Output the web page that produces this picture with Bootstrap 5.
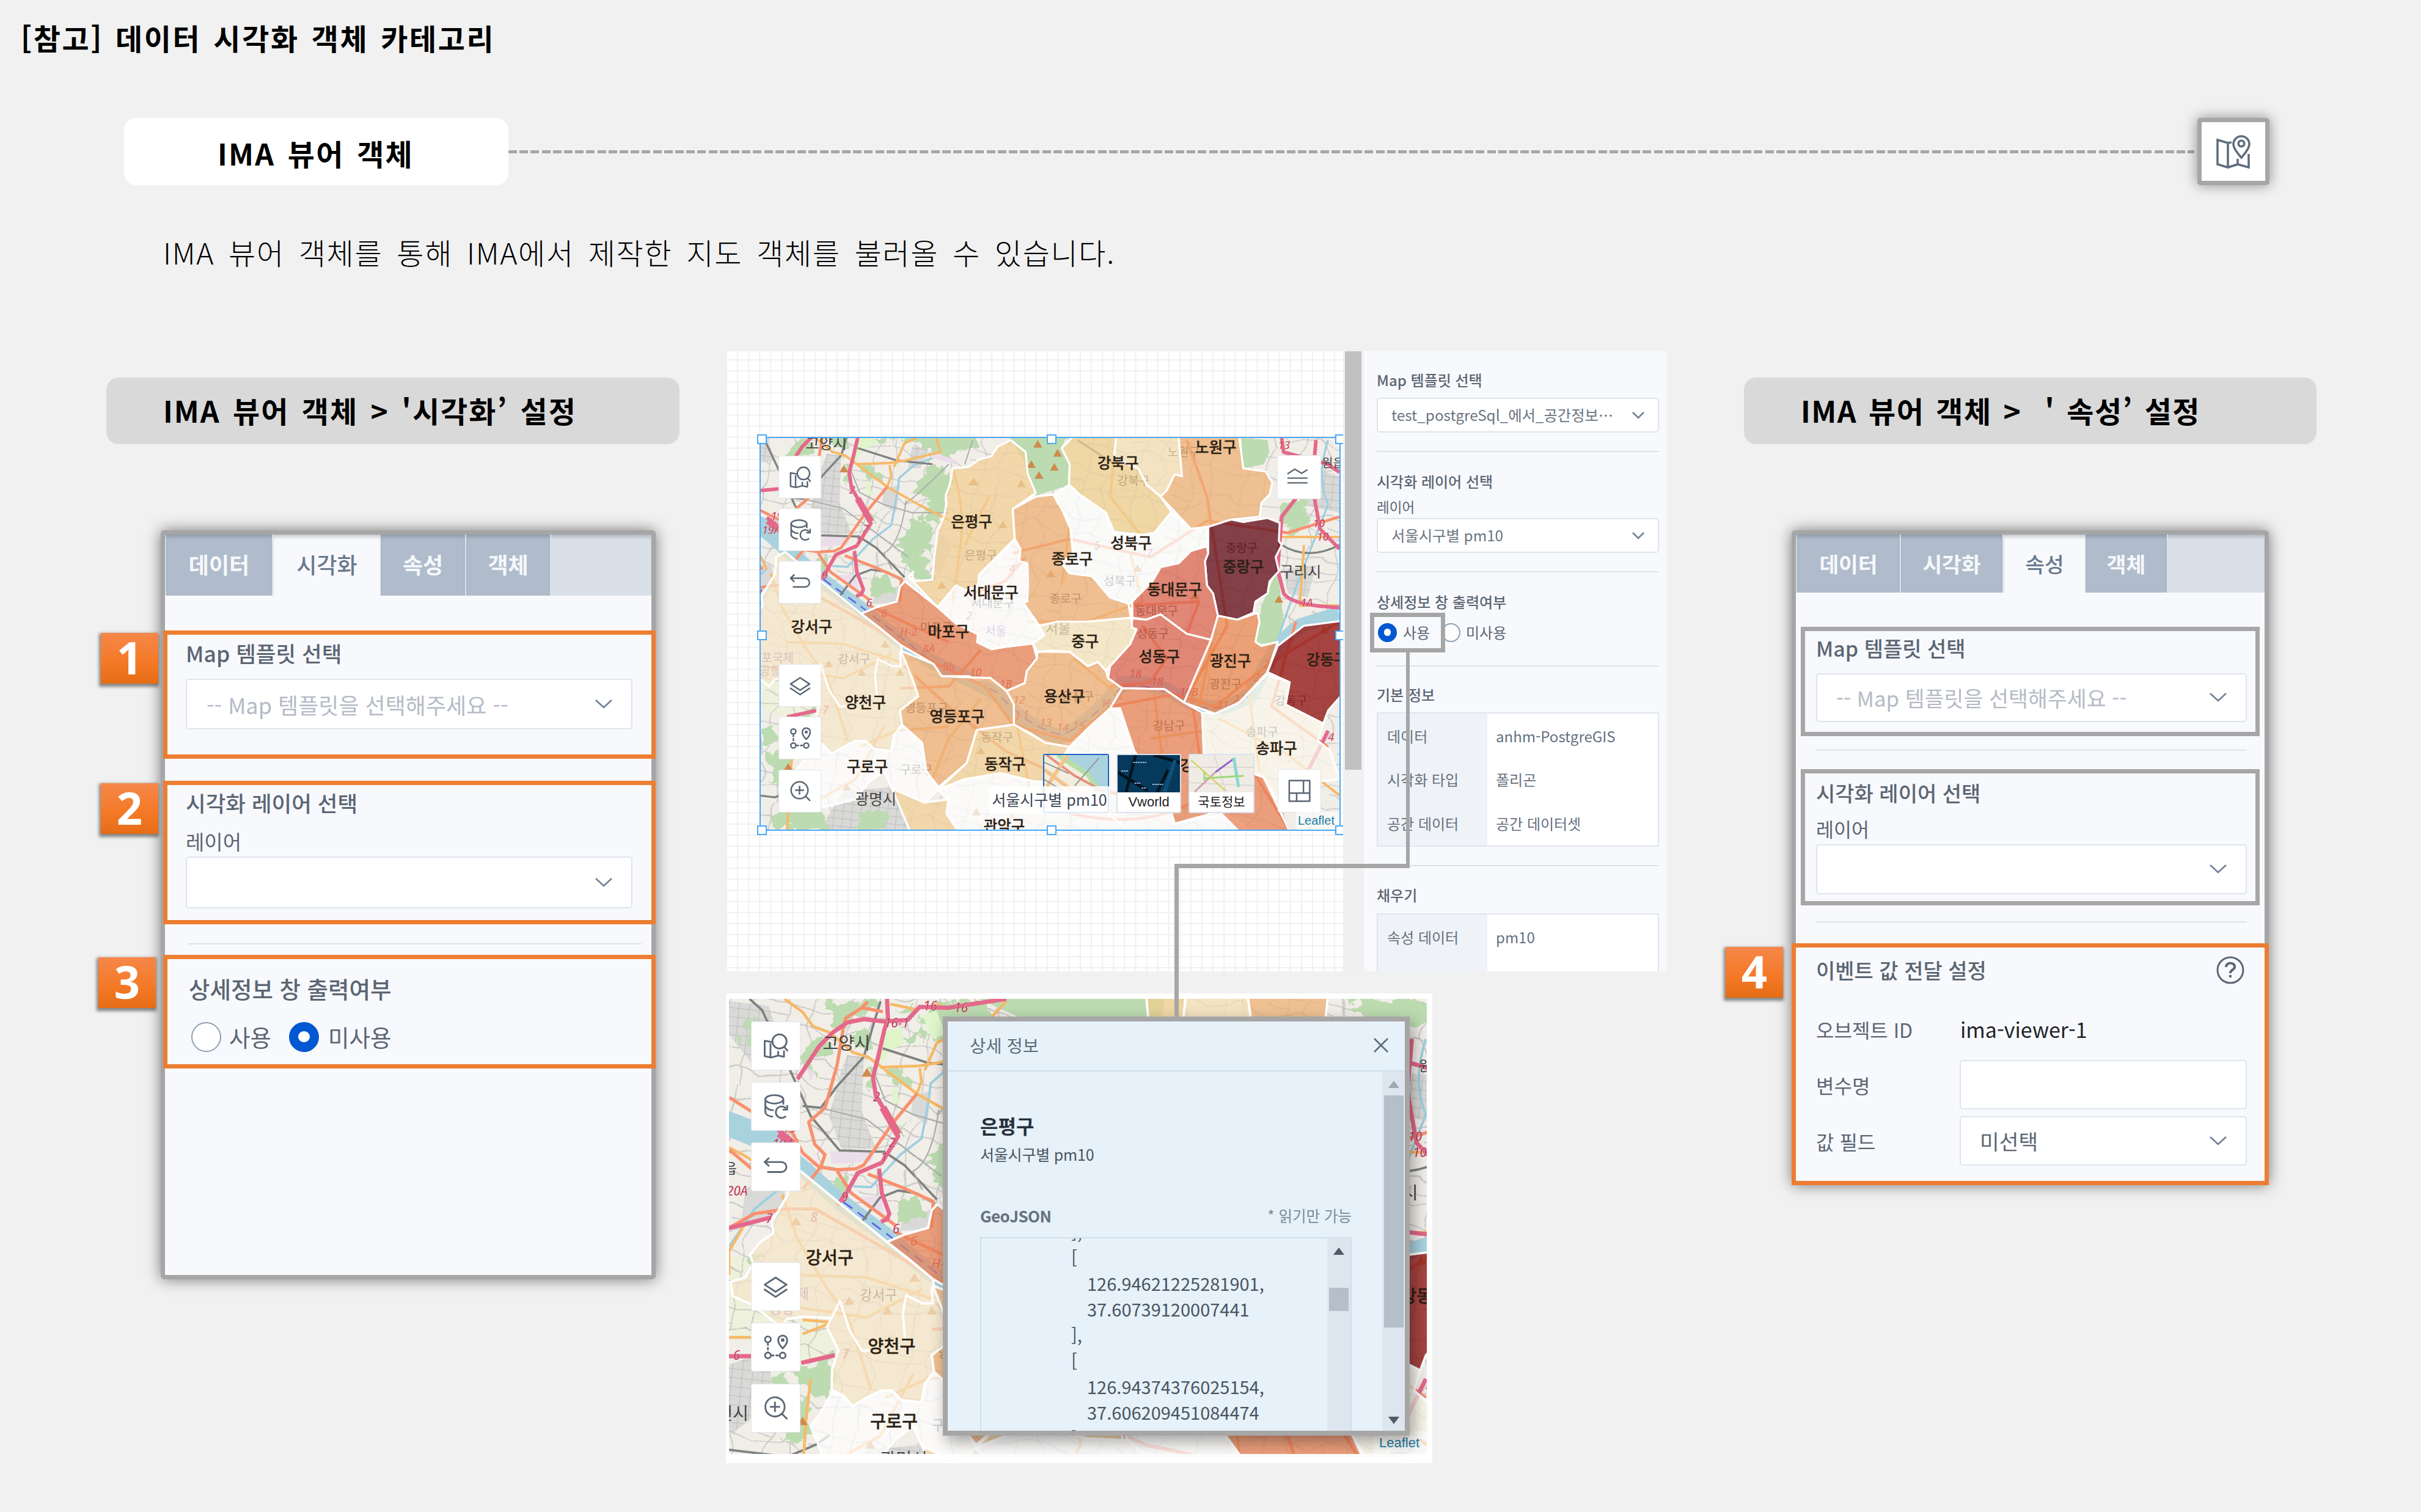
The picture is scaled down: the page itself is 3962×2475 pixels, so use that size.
<!DOCTYPE html>
<html lang="ko">
<head>
<meta charset="utf-8">
<title>데이터 시각화 객체 카테고리</title>
<link href="https://cdn.jsdelivr.net/npm/bootstrap@5.3.0/dist/css/bootstrap.min.css" rel="stylesheet">
<style>
body{width:3962px;height:2475px;overflow:hidden;background:#f1f1f1;font-family:"Noto Sans CJK KR","Noto Sans",sans-serif;color:#5b6673;line-height:1}
.slide-title{padding:31px 0 0 34px;height:193px;font-size:48px;line-height:60px;font-weight:700;color:#000;letter-spacing:2.6px;word-spacing:4px;white-space:nowrap}
.topic-row{height:110px;padding-left:203px;padding-right:248px}
.topic-pill{width:629px;height:110px;border-radius:20px;color:#000;font-size:48px;font-weight:700;letter-spacing:2.2px;word-spacing:5px;padding:4px 2px 0 0;white-space:nowrap}
.dash-line{height:5px;flex:1;background:repeating-linear-gradient(90deg,#a6a6a6 0 14px,transparent 14px 18.2px);margin-right:5px}
.map-btn{width:118px;height:110px;border:7px solid #a6a6a6;border-radius:5px;box-shadow:0 0 22px rgba(0,0,0,.42)}
.intro-text{height:272px;padding:77px 0 0 267px;font-size:48px;line-height:64px;font-weight:300;color:#000;letter-spacing:1.7px;word-spacing:7.8px;white-space:nowrap}
.col-left{width:1188px;padding:43px 0 0 174px}
.col-mid{width:1540px;position:relative}
.col-right{padding:43px 0 0 126px}
.sec-title{height:109px;border-radius:20px;background:#d9d9d9;color:#000;font-size:48px;font-weight:700;letter-spacing:2px;word-spacing:5px;padding:0 0 3px 93px;white-space:pre}
.shot{border:7px solid #a6a6a6;border-radius:6px;background:#f8f9fd;box-shadow:0 0 24px rgba(0,0,0,.5);margin-top:141px}
.shot-l{width:810px;height:1226px;margin-left:89px}
.shot-r{width:781px;height:1072px;margin-left:78px}
.tabbar{background:#dae0e8;box-shadow:inset 0 6px 6px -3px rgba(70,80,90,.35)}
.tabitem{background:#b0bccb;color:#f6f8fb;font-weight:700;border-right:2px solid #dae0e8;box-shadow:inset 0 6px 6px -3px rgba(70,80,90,.35)}
.tabitem.on{background:#f8f9fd;color:#68798d;border:0;font-weight:500}
.callout{position:relative;border:7px solid #ed7d31}
.callout.plain{border-color:#a6a6a6}
.lbl{font-weight:500;white-space:nowrap;display:flex;align-items:center}
.pick{background:#fff;border:2px solid #dfe4ec;border-radius:5px;display:flex;align-items:center;justify-content:space-between;white-space:nowrap}
.ph{color:#b5bac6}
.chev{fill:none;stroke:#6f8095;stroke-width:2.6}
.rule{height:2px;background:#dde2e9}
.radio{border-radius:50%;border:2px solid #8f9fb2;background:#fff;flex:none}
.radio.on{border-color:#0058d0;background:#0058d0;display:flex;align-items:center;justify-content:center}
.radio.on::after{content:"";width:42%;height:42%;border-radius:50%;background:#fff}
.num{position:absolute;width:94px;height:83px;background:linear-gradient(#f5874a,#f57a28 55%,#e66c15);box-shadow:-1px 3px 5px 2px rgba(60,60,60,.6);color:#fff;font:700 74px/80px "Noto Sans","Open Sans",sans-serif;text-align:center}
.board{height:1015px}
.grid-area{width:1010px;padding:140px 0 0 55px;overflow:hidden;background-color:#fff;background-image:linear-gradient(90deg,#f0f0f0 2px,transparent 2px),linear-gradient(#f0f0f0 2px,transparent 2px);background-size:18.1px 18.1px;background-position:0 13px}
.map-w{width:951px;height:645px;position:relative;border:2px solid #4aa8f8}
.map-w>svg.base,.map-2>svg.base{display:block;width:100%;height:100%}
.hd{position:absolute;width:16px;height:16px;border:2px solid #4aa8f8;background:#fff}
.tool{position:absolute;background:#fff;border:1px solid #e0e4ea;border-radius:3px;display:flex;align-items:center;justify-content:center;color:#5b6775}
.tool svg{width:54%;height:54%;fill:none;stroke:currentColor;stroke-width:2.7;stroke-linejoin:round}
.thumb{position:absolute;top:517px;height:97px;background:#fff;border:2px solid #d9e2ee;border-radius:3px;overflow:hidden;font-size:21px;color:#222;text-align:center;white-space:nowrap}
.thumb svg{display:block;width:100%;height:61px}
.layer-tip{position:absolute;left:373px;top:570px;width:199px;height:45px;background:rgba(255,255,255,.85);font-size:25px;color:#3c4654;text-align:center;line-height:42px;white-space:nowrap;border-radius:3px}
.leaf{position:absolute;color:#1f7fa5;font-family:"Liberation Sans",Arial,sans-serif;background:rgba(255,255,255,.6)}
.gutter{width:34px;background:#f0f0f0;padding-left:3px}
.gutter div{width:27px;height:685px;background:#c1c1c1}
.props{width:496px;background:#f8f9fd;padding:25px 13px 0 21px;overflow:hidden;font-size:24px}
.props .lbl.t{height:44px}
.props .pick{height:57px;font-size:24.3px;padding:0 22px;color:#6a7480}
.kv{border:2px solid #dfe5ec;background:#fff;font-size:24px;color:#66717f}
.kv .k{width:179px;background:#eff3f7;padding-left:15px}
.kv .v{padding-left:14px}
.kv>div>div{height:71.5px;padding-top:2px;display:flex;align-items:center;white-space:nowrap}
.hl{position:absolute;left:1054px;top:428px;width:123px;height:65px;border:7px solid #a6a6a6}
.wire{position:absolute;background:#a6a6a6}
.map-2{margin-top:36px;width:1156px;height:769px;background:#fff;padding:9px 9px 15px 5px;position:relative}
.dlg{position:absolute;left:355px;top:38px;width:764px;height:686px;border:8px solid #a6a6a6;background:#e6f1f9;box-shadow:6px 10px 24px rgba(0,0,0,.35);overflow:hidden}
.dlg-h{height:82px;border-bottom:2px solid #cfdeea;padding:0 26px 2px 36px;font-size:28.5px;color:#5f6c7a}
.dlg-m{padding:72px 50px 0 53px}
.dlg-s{width:37px;background:#dde6ee;position:relative}
.geo{border:2px solid #d3dfe9;height:340px;overflow:hidden;font-size:29px;line-height:42.3px;color:#4a545f;white-space:pre}
.arr{fill:#505a64}
</style>
</head>
<body>
<svg width="0" height="0" class="position-absolute">
<defs>
<pattern id="streets" width="130" height="110" patternUnits="userSpaceOnUse" patternTransform="rotate(11)"><path d="M0 20Q60 40 130 20M30 0Q50 50 30 110M0 80L70 62L130 80M95 0L80 62L100 110M0 50L38 54" stroke="#bfbfbf" stroke-width="2" fill="none"/></pattern>
<pattern id="city" width="22" height="19" patternUnits="userSpaceOnUse" patternTransform="rotate(6)"><path d="M0 0H22M0 0V19" stroke="#b3b3b3" stroke-width="2" fill="none"/></pattern>
<filter id="rag" x="-5%" y="-5%" width="110%" height="110%"><feTurbulence type="fractalNoise" baseFrequency=".03" numOctaves="3" seed="4"/><feDisplacementMap in="SourceGraphic" scale="52" xChannelSelector="R" yChannelSelector="G"/></filter>
<filter id="wob" x="-2%" y="-2%" width="104%" height="104%"><feTurbulence type="fractalNoise" baseFrequency=".012" numOctaves="2" seed="9"/><feDisplacementMap in="SourceGraphic" scale="40" xChannelSelector="R" yChannelSelector="G"/></filter>
<symbol id="ic-search" viewBox="0 0 40 40"><path d="M14 14L3 12V36L13 38L24 35L33 37V27M12 16V37M24 28V35"/><circle cx="26" cy="13" r="11"/><path d="M33 21L39 28"/></symbol>
<symbol id="ic-db" viewBox="0 0 40 40"><ellipse cx="18" cy="9" rx="14" ry="6.500"/><path d="M4 9V28C4 33 10 36 16 36M32 9V17M4 19C6 24 11 26 17 26M36 23A9 9 0 1 0 36 35M38 18V25H31"/></symbol>
<symbol id="ic-back" viewBox="0 0 40 40"><path d="M10 6L3 12.500L10 19M3 12.500H29A7.500 7.500 0 0 1 29 28H7"/></symbol>
<symbol id="ic-layer" viewBox="0 0 40 40"><path d="M20 6L37 17L20 28L3 17ZM2 24L20 36L38 24"/></symbol>
<symbol id="ic-route" viewBox="0 0 40 40"><circle cx="8" cy="8" r="4.500"/><circle cx="8" cy="33" r="4.500"/><circle cx="31" cy="33" r="4.500"/><path d="M8 13V28M13 33H26" stroke-dasharray="5 2"/><path d="M31 22C26 17 24 13 24 9A7 7 0 0 1 38 9C38 13 36 17 31 22Z"/><circle cx="31" cy="9" r="1.400"/></symbol>
<symbol id="ic-zoom" viewBox="0 0 40 40"><circle cx="19" cy="18" r="15"/><path d="M30 29L38 37M19 10V26M11 18H27"/></symbol>
<symbol id="seoul" viewBox="5 155 1523 1050">
<path fill="#f1eee8" d="M0 150H1530V1210H0Z"/>
<path fill="#eef2dc" d="M0 700H60L20 760L110 830L220 840L225 900L160 930L0 860Z"/>
<g filter="url(#wob)"><path fill="url(#streets)" d="M-40 110H1570V1250H-40Z"/></g>
<g fill="#d9d9d7"><path d="M259 274L294 278L290 395L320 472L246 472L220 403L246 308ZM5 160L90 170L130 290L60 300L5 230ZM470 255L510 262L490 310L460 310ZM400 360L440 350L430 420L395 400ZM540 470L570 500L540 570L520 560ZM1370 320L1430 300L1528 330V420L1440 400ZM1390 560L1470 550L1450 630L1400 620ZM5 930L90 900L100 1010L5 1080ZM300 1110L420 1100L460 1205H240ZM380 620L440 600L430 645L370 645ZM40 560L120 545L130 600L30 640Z"/></g>
<path fill="url(#city)" d="M259 274L294 278L290 395L320 472L246 472L220 403L246 308ZM5 160L90 170L130 290L60 300L5 230ZM1390 560L1470 550L1450 630L1400 620ZM1370 320L1430 300L1528 330V420L1440 400ZM300 1110L420 1100L460 1205H240ZM5 930L90 900L100 1010L5 1080ZM470 255L510 262L490 310L460 310Z"/>
<g fill="#bcdbb0" filter="url(#rag)"><path d="M210 190L230 165L300 155L320 180L270 200L240 210ZM30 220L60 200L75 240L50 255ZM170 250L220 235L225 265L190 290L180 330L165 300ZM270 225L310 215L305 260L280 262ZM360 170L400 165L420 215L390 240L430 250L420 200L450 160L540 160L640 250L560 280L460 250L440 210ZM300 300L325 310L310 340L298 330ZM345 310L375 300L400 340L360 345ZM500 310L550 300L570 345L540 440L500 430L520 380L480 370L490 350ZM460 440L500 430L515 490L500 520L520 580L475 580L450 540L430 500L450 480ZM370 420L390 410L380 450ZM225 540L255 530L260 560L225 560ZM375 590L410 575L420 615L370 625ZM60 690L80 700L50 720L40 705ZM150 940L230 905L225 985L200 1000L150 970ZM95 950L130 940L130 980L95 990ZM120 1010L180 1000L175 1090L120 1080ZM140 1150L250 1150L270 1205H120ZM340 1165L400 1150L410 1205H330ZM1385 400L1440 390L1460 440L1410 470L1380 450ZM1330 160H1528V200L1420 230Z"/></g>
<g fill="#bcdbb0"><path d="M530 150L940 150L930 235H700L640 200ZM714 235H850L840 260L858 300L856 352L776 378L751 300ZM1285 235L1350 240L1355 270L1340 300L1290 310ZM1335 650L1375 560L1390 690L1375 742L1322 745Z"/></g>
<path fill="#e0f5ca" d="M340 225L375 215L380 250L350 265L325 300L330 250ZM420 190L450 180L470 230L440 240ZM355 350L365 340L370 375L358 380Z"/>
<path fill="#ebdeea" d="M170 300L190 310L180 330ZM222 478L320 478L310 500L225 505ZM520 270L580 290L575 300L520 285ZM285 575L330 572L340 615L300 595Z"/>
<g fill="none" stroke="#a9d2df"><path stroke-width="52" d="M-10 415Q60 440 105 462"/><path stroke-width="36" d="M95 455L170 520L250 590L340 655Q430 735 520 790Q610 830 680 870Q760 960 840 975Q900 950 990 845Q1060 830 1140 880Q1220 930 1310 870Q1370 740 1430 700L1528 670"/></g>
<path fill="none" stroke="#5f5fee" stroke-width="3.500" stroke-dasharray="24 14" d="M250 585L340 650L520 790Q610 830 680 865Q760 955 840 970Q900 950 990 850Q1060 840 1140 885Q1220 930 1310 870"/>
<path fill="none" stroke="#9ccfe0" stroke-width="5" d="M475 302L438 334L429 395L418 451L373 485L333 528L310 554L272 552M475 302L520 285M1500 240Q1470 330 1500 400Q1420 600 1380 720M5 680L60 600L110 560"/>
<g fill="none" stroke="#7f8280" stroke-width="5" stroke-linejoin="round"><path d="M49 155L76 179L141 317L180 403L242 476L338 479L381 507L451 580M290 627L329 576L368 561L408 567L447 589M163 382L202 386L237 340L294 278L330 160M1385 500Q1450 540 1528 500M880 240L970 300M5 1110L130 1125L190 1100L220 1080M335 260L430 290L520 300" /></g>
<g fill="none" stroke="#adadad" stroke-width="3"><path d="M202 386L300 410L380 470L460 530M320 320L340 370L400 400L470 420L560 420M455 390Q440 500 400 520L420 560M560 300Q480 380 450 400M620 240L600 300"/></g>
<g fill="none" stroke="#f7b967" stroke-width="6" stroke-linejoin="round"><path d="M124 155L163 183L185 213L220 226L272 269L303 278L329 297L408 356L490 402L565 440M329 300L412 297L451 291L540 270L530 235L600 160M425 306L451 248L500 225M414 302L418 330L408 356M351 166L403 177L460 166M5 470L40 488L90 520L110 560M5 872H55M163 835L226 840M163 865L220 843M5 740V690L40 630M95 800L300 830L420 770M120 570L150 660L210 760L260 830L290 920L310 985M160 1205L170 1050L180 960M570 310Q600 400 590 500L570 640M660 380L600 500M975 240L960 380L1040 480M1010 520L1040 640L900 690L760 690M860 450L840 600M1385 480L1528 480M1440 500L1430 650L1528 650M870 780L990 880M1225 670L1200 800L1180 900M1300 840L1330 1060M640 880L560 980L520 1080M720 900L760 1100L700 1200M1060 980L1190 960M1230 930L1400 1020L1528 1120M400 950L330 1080L240 1130M1070 870L1100 1120M160 740L300 745L440 790M340 1000L430 960L560 950"/></g>
<g fill="none" stroke="#f9906e" stroke-width="7" stroke-linejoin="round"><path d="M303 161L290 174L255 196L250 218L237 295L211 386L176 416L189 463L211 485L202 511L163 558M290 174L335 182M6 364L54 394L141 438L163 481L198 511L237 517L277 515L294 507L355 420L408 356M237 520L268 567L364 636M303 526L380 556L443 584L440 640M6 475L60 520L100 560M5 640L60 610L130 600L190 600L350 690L520 790L650 850L720 945L860 985L960 900L1120 870L1220 900L1360 790L1528 690M1150 240L1200 380L1250 700L1160 860L1180 1010L1230 1160M720 520L860 485L1060 530L1200 440L1400 470L1528 430M1020 650L1180 640L1150 720M364 650L470 700L560 740M450 800L560 900L700 1010L900 1100L1140 1150M1040 700L1100 780L1060 840L960 850M780 1140Q1000 1220 1160 1140M1420 690L1360 900L1500 1000M620 620L700 590L750 530M1320 1070L1400 1200M440 855L560 850L640 760"/></g>
<g fill="none" stroke="#e5688a" stroke-width="9" stroke-linejoin="round"><path d="M344 155L346 196L338 222L325 278L314 321L320 360L333 381L368 446L346 481L333 502L281 524L259 563L237 593M327 515L333 567L349 610L344 622L331 627M152 325L198 256L228 226L259 205L294 198L338 203L388 200L414 172L475 174L600 155M333 381L368 440M110 432L140 455M95 365L150 360M5 912H55M160 926L232 910M0 642L95 618M1385 235L1390 270L1500 300L1528 320M1470 240L1460 350L1480 460L1528 510M1455 340L1385 430L1375 560L1390 620Q1410 650 1528 655M1500 960L1450 1060"/></g>
<path fill="none" stroke="#e5688a" stroke-width="16" d="M335 385L368 442M112 440L142 462"/>
<g fill="#cf8a4e"><path d="M301 301l11 19h-22ZM781 240l11 19h-22ZM830 262l11 19h-22ZM765 290l11 19h-22ZM822 297l11 19h-22ZM784 317l11 19h-22ZM740 338l11 19h-22ZM622 334l14 18h-28ZM695 440l11 18h-22ZM543 590l11 18h-22ZM1490 700l11 18h-22ZM1378 625l11 18h-22ZM149 617l11 18h-22ZM263 785l11 18h-22ZM345 806l11 18h-22ZM440 806l11 18h-22ZM403 736l11 18h-22ZM640 1000l11 18h-22ZM813 562l11 18h-22ZM1028 548l11 18h-22ZM1170 616l11 18h-22ZM629 1152l11 18h-22ZM308 1090l11 18h-22ZM163 1040l11 18h-22Z"/></g>
<g fill="#b3203f" font-family="Noto Sans,sans-serif" font-style="italic" font-weight="500" font-size="27" stroke="#f7d9de" stroke-width=".6"><text x="314" y="372">2</text><text x="348" y="470">2</text><text x="330" y="500">1</text><text x="246" y="585">9</text><text x="356" y="652">6</text><text x="394" y="678">6</text><text x="98" y="472">19A</text><text x="120" y="438">19</text><text x="0" y="572">20A</text><text x="84" y="630">7</text><text x="1376" y="262">13</text><text x="1462" y="456">10</text><text x="1472" y="490">10</text><text x="1432" y="652">1A</text><text x="1500" y="986">4</text><text x="440" y="726">H-2</text><text x="496" y="766">8A</text><text x="545" y="812">9b</text><text x="612" y="825">10</text><text x="686" y="854">1B</text><text x="720" y="894">12</text><text x="728" y="930">J-1</text><text x="786" y="950">13</text><text x="828" y="962">14</text><text x="868" y="957">15</text><text x="936" y="902">16</text><text x="1008" y="828">18</text><text x="1062" y="848">18</text><text x="1132" y="874">19B</text><text x="1224" y="906">21</text><text x="1266" y="892">22</text><text x="1316" y="838">22</text><text x="1340" y="806">23</text><text x="920" y="510">5</text><text x="1050" y="530">7</text><text x="710" y="568">4</text><text x="604" y="684">2</text><text x="422" y="180">16</text><text x="488" y="184">16</text><text x="338" y="216">16-1</text><text x="180" y="627">8</text><text x="248" y="917">7</text><text x="14" y="920">6</text></g>
<g font-family="Noto Sans CJK KR,sans-serif" font-size="29" fill="#333"><text x="600" y="536">은평구</text><text x="616" y="654">서대문구</text><text x="810" y="644">종로구</text><text x="944" y="599">성북구</text><text x="978" y="352">강북구</text><text x="1102" y="280">노원구</text><text x="1246" y="518">중랑구</text><text x="1022" y="674">동대문구</text><text x="1026" y="730">성동구</text><text x="1206" y="855">광진구</text><text x="1066" y="958">강남구</text><text x="1296" y="974">송파구</text><text x="1368" y="896">강동구</text><text x="490" y="714">마포구</text><text x="286" y="793">강서구</text><text x="452" y="914">영등포구</text><text x="640" y="987">동작구</text><text x="440" y="1068">구로구</text><text x="840" y="886">용산구</text><text x="650" y="724" fill="#8a4fb5">서울</text><text x="800" y="719" font-size="34">서울</text><text x="70" y="790" fill="#7a55b0">김포국제</text><text x="92" y="822" fill="#7a55b0">공항</text></g>
<g stroke="#fff" stroke-width="5" stroke-linejoin="round" fill-opacity=".75">
<path fill="#f6e6c8" d="M131 570L133 530L155 517L344 670L442 748L445 765L470 810L485 875L440 910L445 945L425 970L418 1010L375 1005L355 985L330 985L300 1000L270 1018L250 995L225 983L226 940L240 900L215 850L225 831L163 828L130 833L116 850L90 830L55 803L30 792L13 785L8 755L40 745L57 715L50 698L70 672L100 651L97 627Z"/>
<path fill="none" d="M225 831L243 795L252 822L265 860L290 900H310M383 880L378 820L385 783L420 800L442 800L440 765"/>
<path fill="#fdfdfd" d="M225 990L250 995L270 1018L300 1000L330 985L355 985L375 1005L418 1010L425 970L445 945L495 990L505 1060L535 1105L500 1140L420 1105L400 1060L360 1090L330 1130L250 1150L205 1120L180 1060L200 1035Z"/>
<path fill="#f2cf98" d="M420 1103L500 1138L560 1130L555 1165L585 1210H465Z"/>
<path fill="#fdfdfd" d="M535 1108L600 1080L690 1065L770 1085L860 1090L1010 1210H585L555 1165L560 1130Z"/>
<path fill="#f1cf96" d="M570 310L608 307L638 287L666 280L681 257L714 240L751 270L756 324L776 371L719 411L724 485L683 526L636 573L633 600L603 613L578 600L533 654L462 580L472 566L470 590L520 586L525 526L533 465L548 431L555 398L553 378L563 351Z"/>
<path fill="#e78358" d="M452 590L533 654L578 694L633 721L631 741L666 758L709 751L769 744L779 781L754 812L749 842L704 862L663 829L633 835L611 825L543 825L523 795L442 748L392 707L344 670L382 654L432 640L440 603Z"/>
<path fill="#fdfdfd" d="M533 654L578 600L603 613L633 600L636 573L683 526L724 485L738 510L735 540L755 545L757 590L755 640L745 643L797 724L769 744L709 751L666 758L631 741L633 721L578 694Z"/>
<path fill="#edaf76" d="M719 411L776 380L820 375L830 395L848 420L862 460L868 520L840 545L860 570L915 577L945 612L960 630L1005 645L1012 680L960 686L900 690L830 690L785 700L745 643L755 640L757 590L755 545L735 540L738 510L724 485Z"/>
<path fill="#efcf90" d="M900 150H985L975 235L970 285L1030 310L1050 350L1085 380L1112 418L1070 470L1040 475L970 468L950 420L885 375L858 350L860 300L840 260L865 235L905 200Z"/>
<path fill="#f4dfb4" d="M985 150H1118L1130 235L1140 330L1120 325L1100 375L1085 380L1050 350L1030 310L970 285L975 235Z"/>
<path fill="#edb076" d="M1118 150H1290L1280 235L1290 310L1345 318L1362 345L1355 375L1335 395L1330 430L1260 437L1205 455L1160 460L1085 380L1100 365L1120 325L1138 330L1130 235Z"/>
<path fill="#fcfefd" d="M820 375L858 352L885 375L950 420L955 450L970 468L1040 475L1070 470L1112 418L1160 460L1203 455L1200 503L1160 515L1130 545L1085 560L1065 590L1015 640L1005 645L960 630L945 612L915 577L860 570L840 545L868 520L862 460L840 410Z"/>
<path fill="#6b1a24" fill-opacity=".82" d="M1203 455L1260 437L1290 443L1350 433L1380 445L1378 490L1385 500L1370 530L1378 565L1355 590L1350 620L1320 640L1315 668L1275 685L1227 675L1215 620L1200 600L1195 540L1203 520Z"/>
<path fill="#db6450" d="M1200 503L1203 520L1195 540L1200 600L1215 620L1227 675L1210 735L1150 720L1085 672L1050 685L1015 680L1015 640L1065 590L1085 555L1130 545L1160 515Z"/>
<path fill="#db6450" d="M1015 682L1050 685L1085 672L1150 720L1210 735L1143 890L1095 857L990 855L955 830L960 800L1010 745L1025 708L1013 705Z"/>
<path fill="#f4e4be" d="M785 700L830 690L900 690L1012 680L1015 705L1025 710L1010 745L960 800L950 812L930 790L905 800L860 765L815 762L780 764L769 744L797 724Z"/>
<path fill="#eead74" d="M704 862L749 842L754 812L779 781L780 764L860 765L905 800L930 790L950 812L955 830L990 855L960 905L910 950L860 1000L800 990L760 965L722 945L720 895Z"/>
<path fill="#eead74" d="M442 762L523 795L543 825L611 828L663 829L704 862L722 895L722 945L630 958L605 1040L535 1100L505 1060L495 990L445 945L440 910L485 875L470 830Z"/>
<path fill="#f1cf96" d="M630 958L722 945L800 990L860 1000L840 1030L850 1090L770 1085L690 1065L600 1080L535 1105L605 1040Z"/>
<path fill="#fdfdfe" d="M960 905L985 910L1020 1015L1100 1120L1120 1190L1250 1165L1310 1210H1010L860 1090L840 1030L860 1000L910 950Z"/>
<path fill="#e78358" d="M990 855L1095 857L1143 890L1188 915L1192 1015L1310 1065L1340 1075L1405 1210H1280L1230 1160L1120 1190L1100 1120L1020 1010L985 905L960 905Z"/>
<path fill="#e8854f" d="M1227 675L1275 685L1325 668L1330 690L1320 740L1335 750L1375 740L1355 800L1345 825L1280 890L1220 918L1143 890L1210 735Z"/>
<path fill="#f9f5ea" d="M1188 915L1220 918L1280 890L1345 820L1405 840L1395 895L1488 942L1475 985L1505 1010L1528 1080L1440 1090L1385 1150L1340 1075L1310 1065L1192 1015Z"/>
<path fill="#962320" fill-opacity=".84" d="M1535 688L1440 700L1375 750L1350 815L1405 840L1395 895L1488 942L1500 910L1535 870Z"/>
</g>
<g font-family="Noto Sans CJK KR,sans-serif" font-size="37" fill="#444" text-anchor="middle">
<text x="257" y="262">고양시</text><text x="1432" y="580">구리시</text><text x="380" y="1143">광명시</text><text x="1512" y="308" font-size="30">원읍</text><text x="-4" y="1046">인천시</text><text x="8" y="525" font-size="30">읍</text>
<g font-weight="500" fill="#2a2014" stroke="#2a2014" stroke-width=".5"><text x="617" y="456">은평구</text><text x="980" y="311">강북구</text><text x="1222" y="271">노원구</text><text x="1012" y="509">성북구</text><text x="866" y="549">종로구</text><text x="665" y="631">서대문구</text><text x="1120" y="624">동대문구</text><text x="1290" y="568">중랑구</text><text x="221" y="716">강서구</text><text x="560" y="729">마포구</text><text x="898" y="753">중구</text><text x="1082" y="790">성동구</text><text x="1258" y="801">광진구</text><text x="1497" y="798">강동구</text><text x="354" y="904">양천구</text><text x="847" y="889">용산구</text><text x="581" y="938">영등포구</text><text x="1372" y="1018">송파구</text><text x="359" y="1063">구로구</text><text x="700" y="1057">동작구</text><text x="1150" y="1060">강</text><text x="698" y="1210">관악구</text></g></g>
</symbol>
</defs>
</svg>

<h1 class="slide-title m-0">[참고] 데이터 시각화 객체 카테고리</h1>
<header class="topic-row d-flex align-items-center">
<div class="topic-pill bg-white d-flex align-items-center justify-content-center">IMA 뷰어 객체</div>
<div class="dash-line"></div>
<div class="map-btn bg-white d-flex align-items-center justify-content-center"><svg width="58" height="58" viewBox="0 0 58 58" fill="none" stroke="#5f6d7c" stroke-width="3.600"><path d="M26 14L20 15L3 10V50L20 55L36 50L54 55V33M20 15V55M36 41V50"/><path d="M42 39C33 29 29 23 29 17A13 13 0 0 1 55 17C55 23 51 29 42 39Z"/><circle cx="42" cy="16" r="4.800"/></svg></div>
</header>
<p class="intro-text m-0">IMA 뷰어 객체를 통해 IMA에서 제작한 지도 객체를 불러올 수 있습니다.</p>

<main class="d-flex align-items-start">
<section class="col-left flex-shrink-0">
<div class="sec-title d-flex align-items-center" style="width:938px">IMA 뷰어 객체 &gt; '시각화’ 설정</div>
<div class="shot shot-l">
<div class="tabbar d-flex" style="height:100px;font-size:36px;padding-left:2px"><div class="tabitem d-flex align-items-center justify-content-center pb-1" style="width:175px">데이터</div><div class="tabitem on d-flex align-items-center justify-content-center pb-1" style="width:176px">시각화</div><div class="tabitem d-flex align-items-center justify-content-center pb-1" style="width:140px">속성</div><div class="tabitem d-flex align-items-center justify-content-center pb-1" style="width:139px">객체</div></div>
<div class="callout" style="margin:57px -7px 0 -3px;height:210px;padding:6px 31px 0 30px"><span class="num" style="left:-109px;top:-3px">1</span>
<div class="lbl" style="height:48px;font-size:35.500px">Map 템플릿 선택</div>
<div class="pick ph" style="height:83px;margin-top:18px;font-size:36px;padding:0 31px 0 32px">-- Map 템플릿을 선택해주세요 --<svg width="28" height="18" viewBox="0 0 28 18" class="chev"><path d="M1 2L14 14L27 2"/></svg></div></div>
<div class="callout" style="margin:36px -7px 0 -3px;height:235px;padding:5px 31px 0 30px"><span class="num" style="left:-109px;top:-3px">2</span>
<div class="lbl" style="height:48px;font-size:35.500px">시각화 레이어 선택</div>
<div class="lbl fw-normal" style="height:40px;margin-top:19px;font-size:33px">레이어</div>
<div class="pick" style="height:85px;margin-top:5px;padding:0 31px"><i></i><svg width="28" height="18" viewBox="0 0 28 18" class="chev"><path d="M1 2L14 14L27 2"/></svg></div></div>
<div class="rule" style="margin:31px 16px 0 38px"></div>
<div class="callout" style="margin:17px -7px 0 -3px;height:186px;padding:24px 31px 0 35px"><span class="num" style="left:-113px;top:-3px">3</span>
<div class="lbl" style="height:48px;font-size:37.500px">상세정보 창 출력여부</div>
<div class="d-flex align-items-center" style="height:50px;margin:30px 0 0 4px;font-size:37.500px"><i class="radio" style="width:49px;height:49px;margin-right:13px"></i><span style="width:98px">사용</span><i class="radio on" style="width:49px;height:49px;margin-right:15px"></i><span>미사용</span></div></div>
</div>
</section>

<section class="col-mid flex-shrink-0">
<div class="board d-flex">
<div class="grid-area flex-shrink-0">
<div class="map-w">
<svg class="base" viewBox="95 235 1433 970" preserveAspectRatio="none"><use href="#seoul" x="5" y="155" width="1523" height="1050"/></svg>
<div class="tool" style="left:29px;top:29px;width:70px;height:70px"><svg><use href="#ic-search"/></svg></div>
<div class="tool" style="left:29px;top:115px;width:70px;height:70px"><svg><use href="#ic-db"/></svg></div>
<div class="tool" style="left:29px;top:201px;width:70px;height:70px"><svg><use href="#ic-back"/></svg></div>
<div class="tool" style="left:29px;top:370px;width:70px;height:70px"><svg><use href="#ic-layer"/></svg></div>
<div class="tool" style="left:29px;top:456px;width:70px;height:70px"><svg><use href="#ic-route"/></svg></div>
<div class="tool" style="left:29px;top:543px;width:70px;height:70px"><svg><use href="#ic-zoom"/></svg></div>
<div class="tool" style="left:845px;top:28px;width:72px;height:72px;padding-right:6px"><svg viewBox="0 0 40 40"><path d="M1 14L15 5L28 13L39 6M1 22H39M1 31H39"/></svg></div>
<div class="tool" style="left:846px;top:542px;width:71px;height:71px"><svg viewBox="0 0 40 40"><path d="M2 2H38V38H2ZM27 2V24M2 24H38M15 24V38"/></svg></div>
<div class="thumb" style="left:462px;width:108px;border-color:#1d63c9"><svg viewBox="0 0 104 61" preserveAspectRatio="none"><path fill="#f3eddd" d="M0 0H104V61H0Z"/><path fill="#abd3df" d="M34 0H104V61H82L70 32L34 6Z"/><path stroke="#b5dfa6" stroke-width="8" fill="none" d="M22 0L72 32L90 61"/><path stroke="#e98e7c" stroke-width="4" fill="none" d="M4 0L50 34L100 61"/><path stroke="#f2c38c" stroke-width="6" fill="none" d="M38 0L4 52M0 24L50 61"/><path stroke="#999" stroke-width="2" fill="none" d="M90 4L50 50M0 12L40 30M0 40L30 58"/></svg></div>
<div class="thumb" style="left:582px;width:106px"><svg viewBox="0 0 104 61" preserveAspectRatio="none"><path fill="#063a5c" d="M0 0H104V61H0Z"/><path stroke="#03141f" stroke-width="5" fill="none" d="M30 0L14 61M0 28L50 58M84 24L66 61M60 0L104 12"/><path stroke="#11507a" stroke-width="6" fill="none" d="M96 8L78 61"/><path stroke="#9bb8d8" stroke-width="2" fill="none" stroke-dasharray="3 1" d="M26 12H48M6 26H18M28 46H38M58 48H76M40 54H48"/></svg><div style="font:22px/31px 'Liberation Sans',Arial,sans-serif">Vworld</div></div>
<div class="thumb" style="left:700px;width:108px"><svg viewBox="0 0 104 61" preserveAspectRatio="none"><path fill="#f0ece5" d="M0 0H104V61H0Z"/><path stroke="#dcd9d2" stroke-width="2" fill="none" d="M0 20H104M40 0L60 61M0 45L104 50"/><path stroke="#8f65cf" stroke-width="3" fill="none" d="M72 6L42 28"/><path stroke="#cfa1ae" stroke-width="3" fill="none" d="M42 28L8 60"/><path stroke="#86d9d0" stroke-width="5" fill="none" d="M72 4L80 52"/><path stroke="#9ed778" stroke-width="3" fill="none" d="M24 38L88 34M24 26V42"/><path stroke="#d4cf50" stroke-width="2" fill="none" d="M2 8L58 58"/></svg><div style="line-height:29px">국토정보</div></div>
<div class="layer-tip">서울시구별 pm10</div>
<div class="leaf" style="right:0;bottom:0;font-size:20px;padding:4px 8px 5px 3px">Leaflet</div>
<i class="hd" style="left:-6px;top:-6px"></i><i class="hd" style="left:468px;top:-6px"></i><i class="hd" style="left:940px;top:-6px"></i><i class="hd" style="left:-6px;top:315px"></i><i class="hd" style="left:940px;top:315px"></i><i class="hd" style="left:-6px;top:634px"></i><i class="hd" style="left:468px;top:634px"></i><i class="hd" style="left:940px;top:634px"></i>
</div>
</div>
<div class="gutter flex-shrink-0"><div></div></div>
<div class="props flex-shrink-0">
<div class="lbl t">Map 템플릿 선택</div>
<div class="pick" style="margin-top:7px"><span>test_postgreSql_에서_공간정보⋯</span><svg width="20" height="14" viewBox="0 0 20 14" class="chev"><path d="M1 2L10 11L19 2"/></svg></div>
<div class="rule" style="margin-top:30px"></div>
<div class="lbl t" style="margin-top:26px">시각화 레이어 선택</div>
<div class="lbl fw-normal" style="height:30px;margin-top:4px;font-size:22.500px">레이어</div>
<div class="pick" style="margin-top:4px"><span>서울시구별 pm10</span><svg width="20" height="14" viewBox="0 0 20 14" class="chev"><path d="M1 2L10 11L19 2"/></svg></div>
<div class="rule" style="margin-top:30px"></div>
<div class="lbl t" style="margin-top:26px">상세정보 창 출력여부</div>
<div class="d-flex align-items-center" style="height:34px;margin:11px 0 0 2px"><i class="radio on" style="width:31px;height:31px;margin-right:10px"></i><span style="width:63px">사용</span><i class="radio" style="width:31px;height:31px;margin-right:9px"></i><span>미사용</span></div>
<div class="rule" style="margin-top:37px"></div>
<div class="lbl t" style="margin-top:24px">기본 정보</div>
<div class="kv d-flex" style="margin-top:7px;height:220px"><div class="k pt-0"><div>데이터</div><div>시각화 타입</div><div>공간 데이터</div></div><div class="v"><div>anhm-PostgreGIS</div><div>폴리곤</div><div>공간 데이터셋</div></div></div>
<div class="rule" style="margin-top:30px"></div>
<div class="lbl t" style="margin-top:25px">채우기</div>
<div class="kv d-flex" style="margin-top:8px;height:120px"><div class="k"><div>속성 데이터</div></div><div class="v"><div>pm10</div></div></div>
</div>
</div>
<div class="map-2">
<svg class="base" viewBox="5 155 1497 964" preserveAspectRatio="none"><use href="#seoul" x="5" y="155" width="1523" height="1050"/></svg>
<div class="tool" style="left:41px;top:46px;width:81px;height:80px"><svg><use href="#ic-search"/></svg></div>
<div class="tool" style="left:41px;top:145px;width:81px;height:80px"><svg><use href="#ic-db"/></svg></div>
<div class="tool" style="left:41px;top:244px;width:81px;height:80px"><svg><use href="#ic-back"/></svg></div>
<div class="tool" style="left:41px;top:440px;width:81px;height:80px"><svg><use href="#ic-layer"/></svg></div>
<div class="tool" style="left:41px;top:539px;width:81px;height:80px"><svg><use href="#ic-route"/></svg></div>
<div class="tool" style="left:41px;top:639px;width:81px;height:80px"><svg><use href="#ic-zoom"/></svg></div>
<div class="leaf" style="right:9px;bottom:15px;font-size:22px;padding:8px 12px 7px 10px">Leaflet</div>
<div class="dlg d-flex flex-column">
<div class="dlg-h d-flex align-items-center justify-content-between flex-shrink-0">상세 정보<svg width="26" height="26" viewBox="0 0 26 26" fill="none" stroke="#5f6c7a" stroke-width="2.600"><path d="M2 2L24 24M24 2L2 24"/></svg></div>
<div class="d-flex flex-fill">
<div class="dlg-m flex-fill">
<div class="fw-bold" style="font-size:32px;line-height:32px;color:#27303a">은평구</div>
<div style="font-size:25px;line-height:30px;margin-top:16px;color:#4a545f;letter-spacing:-.2px">서울시구별 pm10</div>
<div class="d-flex justify-content-between" style="margin-top:68px;font-size:26px;line-height:36px"><b style="color:#66717d;letter-spacing:-.6px">GeoJSON</b><span style="font-size:24.500px;color:#7c8b9c">* 읽기만 가능</span></div>
<div class="geo d-flex" style="margin-top:17px"><div class="flex-fill" style="margin-top:-33px;padding-left:147px">],
[
<span style="padding-left:26px">126.94621225281901,</span>
<span style="padding-left:26px">37.60739120007441</span>
],
[
<span style="padding-left:26px">126.94374376025154,</span>
<span style="padding-left:26px">37.606209451084474</span>
],</div><div class="d-flex flex-column align-items-center" style="width:38px;background:#dde6ee;padding-top:15px"><svg width="18" height="12" class="arr"><path d="M9 0L18 12H0Z"/></svg><div style="width:32px;height:38px;margin-top:54px;background:#b4bfc9"></div></div></div>
</div>
<div class="dlg-s d-flex flex-column align-items-center flex-shrink-0"><svg width="18" height="12" style="margin-top:15px"><path fill="#a0a8b0" d="M9 0L18 12H0Z"/></svg><div style="width:32px;height:380px;margin-top:12px;background:#b4bfc9"></div><svg width="18" height="12" class="arr" style="margin-top:146px"><path d="M9 12L18 0H0Z"/></svg></div>
</div>
</div>
</div>
<div class="hl"></div>
<div class="wire" style="left:1113px;top:493px;width:6px;height:353px"></div>
<div class="wire" style="left:734px;top:839px;width:385px;height:7px"></div>
<div class="wire" style="left:734px;top:839px;width:7px;height:254px"></div>
</section>

<section class="col-right flex-shrink-0">
<div class="sec-title d-flex align-items-center" style="width:937px;letter-spacing:1.500px;word-spacing:4px">IMA 뷰어 객체 &gt;  ' 속성’ 설정</div>
<div class="shot shot-r">
<div class="tabbar d-flex" style="height:95px;font-size:34.500px;padding-left:2px"><div class="tabitem d-flex align-items-center justify-content-center" style="width:170px">데이터</div><div class="tabitem d-flex align-items-center justify-content-center" style="width:168px">시각화</div><div class="tabitem on d-flex align-items-center justify-content-center" style="width:134px">속성</div><div class="tabitem d-flex align-items-center justify-content-center" style="width:135px">객체</div></div>
<div class="callout plain" style="margin:56px 8px 0;height:179px;padding:4px 14px 0 18px">
<div class="lbl" style="height:48px;font-size:34px">Map 템플릿 선택</div>
<div class="pick ph" style="height:80px;margin-top:17px;font-size:34.700px;padding:0 31px">-- Map 템플릿을 선택해주세요 --<svg width="28" height="18" viewBox="0 0 28 18" class="chev"><path d="M1 2L14 14L27 2"/></svg></div></div>
<div class="rule" style="margin:22px 29px 0 33px"></div>
<div class="callout plain" style="margin:30px 8px 0;height:223px;padding:8px 14px 0 18px">
<div class="lbl" style="height:48px;font-size:34px">시각화 레이어 선택</div>
<div class="lbl fw-normal" style="height:40px;margin-top:15px;font-size:31.500px">레이어</div>
<div class="pick" style="height:82px;margin-top:5px;padding:0 31px"><i></i><svg width="28" height="18" viewBox="0 0 28 18" class="chev"><path d="M1 2L14 14L27 2"/></svg></div></div>
<div class="rule" style="margin:26px 29px 0 33px"></div>
<div class="callout" style="margin:34px -7px -7px;height:396px;padding:13px 29px 0 33px;font-size:32px"><span class="num" style="left:-115px;top:-1px">4</span>
<div class="d-flex justify-content-between align-items-center" style="height:48px"><div class="lbl" style="font-size:34px">이벤트 값 전달 설정</div><svg width="46" height="46" viewBox="0 0 46 46" style="margin-right:4px" fill="none" stroke="#5b6673" stroke-width="3"><circle cx="23" cy="23" r="21"/><path stroke-width="4" d="M16 18C16 9 31 10 30 18C30 23 23 22 23 28M23 31V35"/></svg></div>
<div class="d-flex align-items-center" style="height:60px;margin-top:43px"><span style="width:236px">오브젝트 ID</span><span style="font-size:34px;color:#20242a">ima-viewer-1</span></div>
<div class="d-flex align-items-center" style="height:81px;margin-top:20px"><span style="width:235px">변수명</span><div class="pick flex-fill h-100"></div></div>
<div class="d-flex align-items-center" style="height:81px;margin-top:11px"><span style="width:235px">값 필드</span><div class="pick flex-fill h-100" style="padding:0 31px;font-size:34.500px">미선택<svg width="28" height="18" viewBox="0 0 28 18" class="chev"><path d="M1 2L14 14L27 2"/></svg></div></div>
</div>
</div>
</section>
</main>
</body>
</html>
